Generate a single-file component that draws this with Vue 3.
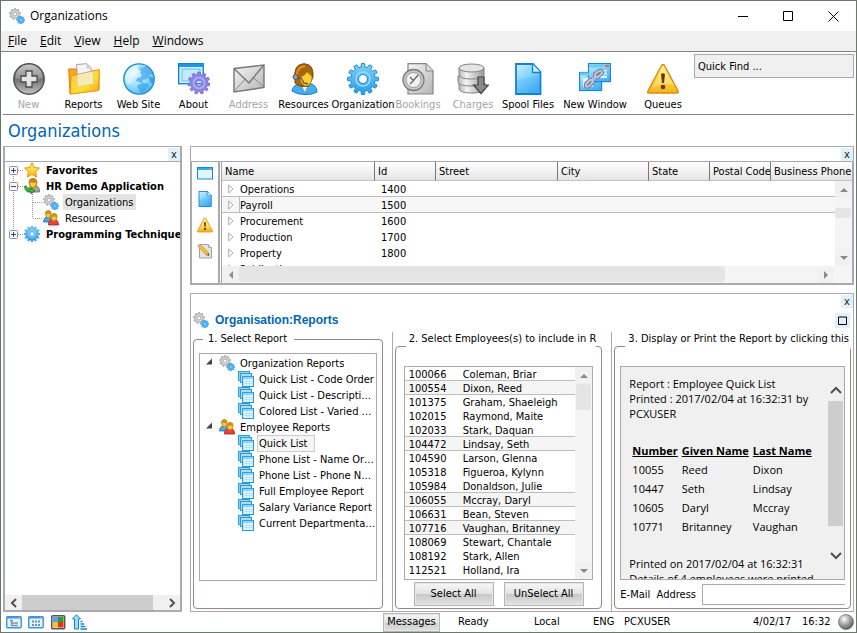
<script setup>
import { ref } from 'vue'

const gear = (cx, cy, outer, inner, teeth, hole) => {
  const step = (Math.PI * 2) / teeth
  const point = (r, a) => `${(cx + r * Math.cos(a)).toFixed(2)} ${(cy + r * Math.sin(a)).toFixed(2)}`
  let d = ''
  for (let i = 0; i < teeth; i++) {
    const a = i * step - Math.PI / 2
    d += `${i ? 'L' : 'M'}${point(inner, a - step * 0.32)}L${point(outer, a - step * 0.2)}`
    d += `L${point(outer, a + step * 0.2)}L${point(inner, a + step * 0.32)}`
  }
  return `${d}ZM${cx - hole} ${cy}a${hole} ${hole} 0 1 0 ${hole * 2} 0a${hole} ${hole} 0 1 0 ${-hole * 2} 0Z`
}

const menus = ['File', 'Edit', 'View', 'Help', 'Windows']
const tools = [
  { label: 'New', icon: 'new', off: true },
  { label: 'Reports', icon: 'reports' },
  { label: 'Web Site', icon: 'globe' },
  { label: 'About', icon: 'about' },
  { label: 'Address', icon: 'mail', off: true },
  { label: 'Resources', icon: 'person' },
  { label: 'Organization', icon: 'gear' },
  { label: 'Bookings', icon: 'bookings', off: true },
  { label: 'Charges', icon: 'charges', off: true },
  { label: 'Spool Files', icon: 'page' },
  { label: 'New Window', icon: 'link' },
  { label: 'Queues', icon: 'warning' },
]
const nav = [
  { label: 'Favorites', icon: 'star', box: '+', line: 'M8.5 8V16' },
  { label: 'HR Demo Application', icon: 'user', box: '-', line: 'M8.5 0V16' },
  { label: 'Organizations', icon: 'gears', child: true, on: true, line: 'M8.5 0V16M9 8.5H19' },
  { label: 'Resources', icon: 'people', child: true, line: 'M8.5 0V8M9 8.5H19' },
  { label: 'Programming Techniques', icon: 'gear', box: '+', line: 'M8.5 0V8' },
]
const columns = ['Name', 'Id', 'Street', 'City', 'State', 'Postal Code', 'Business Phone']
const orgs = [
  ['Operations', '1400'],
  ['Payroll', '1500'],
  ['Procurement', '1600'],
  ['Production', '1700'],
  ['Property', '1800'],
  ['Publications', ''],
]
const reports = [
  { label: 'Organization Reports', icon: 'gears', top: true },
  { label: 'Quick List - Code Order' },
  { label: 'Quick List - Description Order' },
  { label: 'Colored List - Varied Fonts' },
  { label: 'Employee Reports', icon: 'people', top: true },
  { label: 'Quick List', on: true },
  { label: 'Phone List - Name Order' },
  { label: 'Phone List - Phone Number' },
  { label: 'Full Employee Report' },
  { label: 'Salary Variance Report' },
  { label: 'Current Departmental Report' },
]
const employees = ref([
  ['100066', 'Coleman, Briar'],
  ['100554', 'Dixon, Reed', true],
  ['101375', 'Graham, Shaeleigh'],
  ['102015', 'Raymond, Maite'],
  ['102033', 'Stark, Daquan'],
  ['104472', 'Lindsay, Seth', true],
  ['104590', 'Larson, Glenna'],
  ['105318', 'Figueroa, Kylynn'],
  ['105984', 'Donaldson, Julie'],
  ['106055', 'Mccray, Daryl', true],
  ['106631', 'Bean, Steven'],
  ['107716', 'Vaughan, Britanney', true],
  ['108069', 'Stewart, Chantale'],
  ['108192', 'Stark, Allen'],
  ['112521', 'Holland, Ira'],
])
const mark = (value) => employees.value.forEach((e) => { e[2] = value })
const printed = [
  ['10055', 'Reed', 'Dixon'],
  ['10447', 'Seth', 'Lindsay'],
  ['10605', 'Daryl', 'Mccray'],
  ['10771', 'Britanney', 'Vaughan'],
]
const quickFind = ref('Quick Find ...')
const email = ref('')
</script>

<template>
  <svg class="defs" width="0" height="0" aria-hidden="true">
    <defs>
      <linearGradient id="gBlue" x1="0" y1="0" x2="0.6" y2="1"><stop offset="0" stop-color="#d2f2ff" /><stop offset="0.5" stop-color="#86d2fb" /><stop offset="1" stop-color="#45b2f5" /></linearGradient>
      <linearGradient id="gGear" x1="0" y1="0" x2="0" y2="1"><stop offset="0" stop-color="#7fd0fa" /><stop offset="1" stop-color="#2d9cea" /></linearGradient>
      <linearGradient id="gGrey" x1="0" y1="0" x2="1" y2="1"><stop offset="0" stop-color="#f6f6f6" /><stop offset="1" stop-color="#b4b4b4" /></linearGradient>
      <linearGradient id="gDark" x1="0" y1="0" x2="0" y2="1"><stop offset="0" stop-color="#b9b9b9" /><stop offset="0.5" stop-color="#6e6e6e" /><stop offset="1" stop-color="#c4c4c4" /></linearGradient>
      <linearGradient id="gGold" x1="0" y1="0" x2="0" y2="1"><stop offset="0" stop-color="#fff3a0" /><stop offset="0.5" stop-color="#ffd83a" /><stop offset="1" stop-color="#f7b21c" /></linearGradient>
      <linearGradient id="gFolder" x1="0" y1="0" x2="1" y2="1"><stop offset="0" stop-color="#ffc04a" /><stop offset="0.6" stop-color="#ffe22c" /><stop offset="1" stop-color="#f59a16" /></linearGradient>
      <linearGradient id="gCyl" x1="0" y1="0" x2="1" y2="0"><stop offset="0" stop-color="#b5b5b5" /><stop offset="0.3" stop-color="#f4f4f4" /><stop offset="1" stop-color="#9a9a9a" /></linearGradient>
      <radialGradient id="gGlobe" cx="0.35" cy="0.3" r="0.8"><stop offset="0" stop-color="#e9fbff" /><stop offset="0.5" stop-color="#a4e2ff" /><stop offset="1" stop-color="#46b0f0" /></radialGradient>
      <radialGradient id="gBall" cx="0.38" cy="0.3" r="0.75"><stop offset="0" stop-color="#fff" /><stop offset="0.4" stop-color="#b5b5b5" /><stop offset="1" stop-color="#555" /></radialGradient>
    </defs>

    <symbol id="i-new" viewBox="0 0 32 32">
      <circle cx="16" cy="16" r="15.2" fill="url(#gDark)" stroke="#4f4f4f" stroke-width="1.4" />
      <path d="M2.5 15A13.5 13.5 0 0 1 29.500 15Q16 21 2.500 15Z" fill="#fff" opacity=".22" />
      <path d="M13 8h6v5h5v6h-5v5h-6v-5H8v-6h5Z" fill="#e4e4e4" stroke="#4a4a4a" stroke-width="1.3" />
    </symbol>
    <symbol id="i-reports" viewBox="0 0 32 32">
      <path d="M.7 6h8l2 2H31v19L2 31Z" fill="#f9a51f" stroke="#e07d10" />
      <path d="M8.500 1.500 19 .700l4 4V20H10Z" fill="#f4f4f4" stroke="#a5a5a5" />
      <path d="M18.500 1v4.500H23Z" fill="#cdcdcd" />
      <path d="M3 13 31.300 6.500 30.500 27.500 2.500 31Z" fill="url(#gFolder)" stroke="#ee9614" />
      <path d="m9 11.500 16.500-3.500v13L9 24Z" fill="#f2f2ea" stroke="#c9c3a8" stroke-width=".8" opacity=".7" />
    </symbol>
    <symbol id="i-globe" viewBox="0 0 32 32">
      <circle cx="16" cy="16" r="15.200" fill="url(#gGlobe)" stroke="#168bd9" stroke-width="1.300" />
      <path d="m14 5 3-2.500 5 0 5 3.500 3 5-4 1-2 4-4 1-1 2 3 1-2 1-4-2-3-1 1-3 4-1 1-2-2-2 1-2Z" fill="#3ba2ea" opacity=".7" />
      <path d="m16 21 4 0 4-1 2 2-1 3-4 4-3 1.500-2-4-2-3Z" fill="#3ba2ea" opacity=".7" />
      <path d="m25 13 4 1 2 2-1 5-3-2Z" fill="#2d99e8" opacity=".8" />
      <path d="M2 13Q8-1 24 3 12 6 10 15T3 20Z" fill="#fff" opacity=".4" />
    </symbol>
    <symbol id="i-about" viewBox="0 0 32 32">
      <rect x=".7" y=".7" width="24.500" height="20" fill="#d9f3ff" stroke="#0e83d8" stroke-width="1.400" />
      <path d="M1 2.500h24" stroke="#1c96e6" stroke-width="3" />
      <rect x="4" y="6" width="18" height="12" fill="#c0eaff" stroke="#5dbdf2" />
      <path :d="gear(21, 20, 11, 8.5, 11, 3)" fill="#8b86e6" fill-rule="evenodd" stroke="#6e6ac9" stroke-width=".8" />
      <circle cx="21" cy="20" r="5.500" fill="none" stroke="#b5b0f5" stroke-width="1.500" />
    </symbol>
    <symbol id="i-mail" viewBox="0 0 32 32">
      <path d="m1 5.500 30-3.500v22.500L1 29Z" fill="url(#gGrey)" stroke="#767676" stroke-width="1.400" />
      <path d="m1 28.500 11.500-13M31 24 19.500 14" stroke="#8a8a8a" fill="none" />
      <path d="m1.500 6 14.500 14L30.500 2.500" stroke="#777" stroke-width="1.400" fill="none" />
    </symbol>
    <symbol id="i-person" viewBox="0 0 32 32">
      <path d="M4 28q0-5 8-8l9 0q8 2 8 9-5 3-12 2.500Q9 31.500 4 28Z" fill="#48acee" stroke="#167ecb" />
      <path d="M13 21h7l-3 8Z" fill="#f2fbff" />
      <path d="M7 17Q5 1 16 .700 26 1 25 14l-4 9q-9 2-14-3Z" fill="#a9650d" stroke="#7e4606" />
      <path d="M12 14q5-1 7-5 4 3 5 5-1 9-6 9-6-2-6-9Z" fill="#ffcf2f" stroke="#c5810e" stroke-width=".7" />
      <path d="M9 12q0-8 8-9" stroke="#d89330" stroke-width="2" fill="none" />
      <path d="M7 15h6l3 5 4 1" stroke="#555" stroke-width="1.300" fill="none" /><circle cx="7.500" cy="14" r="2.500" fill="#9a9a9a" stroke="#555" />
    </symbol>
    <symbol id="i-gear" viewBox="0 0 32 32">
      <path :d="gear(16, 16, 15.5, 12, 12, 4.5)" fill="url(#gGear)" fill-rule="evenodd" stroke="#148ce0" />
      <circle cx="16" cy="16" r="7" fill="none" stroke="#9bdafb" stroke-width="1.500" />
    </symbol>
    <symbol id="i-bookings" viewBox="0 0 32 32">
      <path d="M6 .700h18l7 7V31H6Z" fill="url(#gGrey)" stroke="#858585" stroke-width="1.200" />
      <path d="M24 1v7h7" fill="#ddd" stroke="#858585" />
      <circle cx="11.500" cy="17" r="10.500" fill="#c8c8c8" stroke="#7c7c7c" stroke-width="1.300" />
      <circle cx="11.500" cy="17" r="7.500" fill="#f1f1f1" stroke="#999" />
      <path d="m8 14 3.500 3.500L16 12M8 21l3.500-3.500" stroke="#666" stroke-width="1.300" fill="none" />
    </symbol>
    <symbol id="i-charges" viewBox="0 0 32 32">
      <g fill="url(#gCyl)" stroke="#828282">
        <path d="M2 20v6q1 4 13 4t13-4v-6Z" /><path d="M1 13v6q1 4 13 4t13-4v-6Z" /><path d="M2 5v7q1 4 12.500 4T27 12V5Z" />
        <ellipse cx="14.500" cy="5" rx="12.500" ry="4" fill="#e5e5e5" />
      </g>
      <path d="M21 14h6v8h4.500L24 30.500 16.500 22H21Z" fill="#898989" stroke="#444" stroke-width="1.200" />
    </symbol>
    <symbol id="i-page" viewBox="0 0 32 32">
      <path d="M4 1h17l7.500 8V31H4Z" fill="url(#gBlue)" stroke="#0f83d6" stroke-width="1.800" />
      <path d="M20.500 1v8.500h8" fill="#c9eeff" stroke="#0f83d6" stroke-width="1.300" />
      <path d="M5 17 27 12v18H5Z" fill="#1e9cf0" opacity=".14" />
    </symbol>
    <symbol id="i-link" viewBox="0 0 32 32">
      <g fill="url(#gBlue)" stroke="#1389d8" stroke-width="1.200"><rect x=".6" y="9.500" width="22" height="18" /><rect x="9.500" y=".6" width="22" height="18" /></g>
      <path d="M1 11h10M10 3h15" stroke="#6bc9f8" stroke-width="3" /><path d="M26 3h4" stroke="#e96644" stroke-width="2" />
      <path d="M18 7h10v8H18ZM4 15h10v9H4Z" fill="#def5ff" /><path d="M19 9h9M19 12h9M15 20h6M15 23h6" stroke="#55b8ed" />
      <g fill="none" stroke="#7d7a9e" stroke-width="4"><path d="m7 21 4-4q3-1 3 2l-4 4q-4 2-3-2Z" /><path d="m16 11 4-3q3-1 3 2l-4 4q-4 1-3-3Z" /></g>
      <g fill="none" stroke="#c4c1df" stroke-width="2"><path d="m7 21 4-4q3-1 3 2l-4 4q-4 2-3-2Z" /><path d="m16 11 4-3q3-1 3 2l-4 4q-4 1-3-3Z" /><path d="m12 18 6-5" /></g>
      <path d="m10 21 1.500-2M19.500 11.500l1.500-1.500" stroke="#4fae4a" stroke-width="1.500" />
    </symbol>
    <symbol id="i-warning" viewBox="0 0 32 32">
      <path d="M16 1.500q1 0 2 2L31 28q1 2-1 2H2q-2 0-1-2L14 3.500q1-2 2-2Z" fill="url(#gGold)" stroke="#da8d10" stroke-width="1.500" />
      <path d="M16 5 27.500 22Q13 19 5 26Z" fill="#fff" opacity=".28" />
      <path d="M14 11q2-1.500 4 0l-1 9h-2Z" fill="#6b3403" /><circle cx="16" cy="24" r="2.300" fill="#6b3403" />
    </symbol>
    <symbol id="i-gears" viewBox="0 0 16 16">
      <path :d="gear(6, 6, 5.700, 4.400, 9, 1.600)" fill="#b9b9b9" fill-rule="evenodd" stroke="#9a9a9a" stroke-width=".4" />
      <circle cx="6" cy="6" r="3" fill="none" stroke="#dedede" />
      <path :d="gear(11.800, 12, 4, 3.100, 8, 1)" fill="#4fb4f5" fill-rule="evenodd" stroke="#2390de" stroke-width=".5" />
    </symbol>
    <symbol id="i-star" viewBox="0 0 16 16"><path d="m8 .700 2.200 4.800 5.200.600-3.800 3.600 1 5.300L8 12.400 3.400 15l1-5.300L.600 6.100l5.200-.600Z" fill="url(#gGold)" stroke="#dc9410" /></symbol>
    <symbol id="i-user" viewBox="0 0 16 16">
      <path d="M3 14q0-5 5-6h4q4 1 3.500 6Z" fill="#a6a6a6" stroke="#666" stroke-width=".8" />
      <path d="M5 4q0-3.500 4-3.500t4 3.500q0 5-4 6-4-1-4-6Z" fill="#ffcd36" stroke="#b9750c" /><path d="M5 4Q6 0 9.500.600 13 1 13 4.500 8 5 5 4Z" fill="#c8820f" />
      <path d="m.6 8 2 0q0 3 4.400 3.500V9.500l4 3.500-4 3v-2Q0 13.500.6 8Z" fill="#3cba33" stroke="#17801a" stroke-width=".8" />
    </symbol>
    <symbol id="i-people" viewBox="0 0 16 16">
      <path d="M.6 12q0-5 4-5h2q3 1 3 5Z" fill="#43a8ea" stroke="#1676bb" stroke-width=".8" />
      <path d="M2.500 3.500q0-3 2.800-3t2.700 3q0 4-2.700 4.500-2.800-.500-2.800-4.500Z" fill="#ffc72c" stroke="#c98012" stroke-width=".8" /><path d="M2 4q1-4 4-3.400Q8.500 1 8 4Z" fill="#d88a1c" />
      <path d="M5.500 15q0-5 4-5.500h3q3 1 3 5.500Z" fill="#e84635" stroke="#a71b12" stroke-width=".8" />
      <path d="M8 6.500q0-3 3-3t3 3q0 4-3 4.500-3-.500-3-4.500Z" fill="#ffc72c" stroke="#c98012" stroke-width=".8" /><path d="M7.500 7q1-4 4-3.700 3 .500 2.800 3.200Z" fill="#d88a1c" />
    </symbol>
    <symbol id="i-window" viewBox="0 0 16 16"><rect x=".5" y="2.500" width="15" height="11.500" fill="#e0f5ff" stroke="#138bdb" /><path d="M1 4h14" stroke="#35a9ef" stroke-width="2" /><path d="M12 4h2.500" stroke="#f09a5a" /></symbol>
    <symbol id="i-edit" viewBox="0 0 16 16"><path d="M2.500 1.500h9l3 3V15h-12Z" fill="#e4e4e4" stroke="#a2a2a2" /><path d="M11.500 1.500v3h3" fill="#fff" stroke="#a2a2a2" /><path d="m.7 3 2.300-1.500 8.500 8 .5 3-3-.700Z" fill="#f8bf3b" stroke="#b98332" stroke-width=".7" /><path d="m10 12 2 .500-.400-2Z" fill="#333" /></symbol>
    <symbol id="i-stack" viewBox="0 0 16 16">
      <rect x=".5" y=".5" width="11" height="9" fill="#8fd6fb" stroke="#2d9be0" />
      <rect x="2.500" y="2.500" width="11" height="9" fill="#a5dffc" stroke="#2d9be0" />
      <rect x="4.500" y="5.500" width="11" height="10" fill="#8fd6fb" stroke="#2d9be0" />
      <path d="M5.500 8h9v7h-9Z" fill="#eaf9ff" />
      <path d="M5.500 10.500h9M5.500 12.500h9M8.500 8v7M11.500 8v7" stroke="#a9defa" stroke-width=".8" />
    </symbol>
    <symbol id="i-tree" viewBox="0 0 16 16"><rect x=".7" y="2.700" width="14.500" height="11" rx="1" fill="#e2f4ff" stroke="#3b95df" stroke-width="1.400" /><path d="M1 3.500h14" stroke="#3b95df" stroke-width="2" /><path d="M4 6.500h3M5.500 7v4.500H8M6 9h6M8 11.500h4" stroke="#8794a0" stroke-width="1.400" fill="none" /><path d="M12 3.500h2" stroke="#f29a49" /></symbol>
    <symbol id="i-tiles" viewBox="0 0 16 16"><rect x=".7" y="2.700" width="14.500" height="11" rx="1" fill="#e2f4ff" stroke="#3b95df" stroke-width="1.400" /><path d="M1 3.500h14" stroke="#3b95df" stroke-width="2" /><path d="M4 7.500h8M4 11h8" stroke="#7b8e9e" stroke-width="2" stroke-dasharray="2 1" /><path d="M12 3.500h2" stroke="#f29a49" /></symbol>
    <symbol id="i-color" viewBox="0 0 16 16"><rect x="1.700" y="1.700" width="13" height="13" rx="1" fill="#ddd" stroke="#565656" stroke-width="1.400" /><path d="M3 3h5v5H3Z" fill="#4aa6f2" /><path d="M8 3h5.500v5H8Z" fill="#2ca02c" /><path d="M3 8h5v5.500H3Z" fill="#f6c22b" /><path d="M8 8h5.500v5.500H8Z" fill="#e8331c" /></symbol>
    <symbol id="i-sort" viewBox="0 0 16 16"><path d="m4.500.700 4 4.300H6.500v10h-4V5H.5Z" fill="#9bdcfb" stroke="#1585cf" /><path d="M8.500 7.500h2M8.500 10h3.500M8.500 12.500h5M8.500 15h6.500" stroke="#1585cf" stroke-width="1.600" /></symbol>
    <symbol id="i-ball" viewBox="0 0 16 16"><circle cx="8" cy="8" r="7.500" fill="url(#gBall)" stroke="#555" stroke-width=".6" /></symbol>
    <symbol id="a-up" viewBox="0 0 8 8"><path d="M0 6 4 2l4 4Z" fill="currentColor" /></symbol>
    <symbol id="a-down" viewBox="0 0 8 8"><path d="m0 2 4 4 4-4Z" fill="currentColor" /></symbol>
    <symbol id="a-left" viewBox="0 0 8 8"><path d="M6 0 2 4l4 4Z" fill="currentColor" /></symbol>
    <symbol id="a-right" viewBox="0 0 8 8"><path d="m2 0 4 4-4 4Z" fill="currentColor" /></symbol>
  </svg>

  <div class="window">
    <header class="title">
      <svg class="i16"><use href="#i-gears" /></svg>
      <span>Organizations</span>
      <div class="controls">
        <button aria-label="Minimize"><svg viewBox="0 0 11 11"><path d="M0 5.500h10" /></svg></button>
        <button aria-label="Maximize"><svg viewBox="0 0 11 11"><path d="M.5.500h9v9h-9Z" /></svg></button>
        <button aria-label="Close"><svg viewBox="0 0 11 11"><path d="m.5.500 10 10m0-10-10 10" /></svg></button>
      </div>
    </header>
    <nav class="menu">
      <button v-for="m in menus" :key="m"><u>{{ m[0] }}</u>{{ m.slice(1) }}</button>
    </nav>
    <div class="toolbar">
      <div class="tools">
        <button v-for="t in tools" :key="t.label" :disabled="t.off">
          <svg><use :href="'#i-' + t.icon" /></svg><span>{{ t.label }}</span>
        </button>
      </div>
      <input v-model="quickFind" class="find" aria-label="Quick Find" />
    </div>
    <h1>Organizations</h1>

    <main>
      <section class="panel side">
        <div class="strip"><button class="x" aria-label="Close">x</button></div>
        <div class="tree">
          <div v-for="n in nav" :key="n.label" class="node" :class="{ child: n.child }">
            <svg v-if="n.child" class="guide"><path d="M8.500 0V16" /></svg>
            <svg class="guide">
              <path :d="n.line" />
              <template v-if="n.box">
                <path d="M13 8.500h6" />
                <rect x="4.500" y="4.500" width="8" height="8" rx="1" />
                <path class="sign" :d="n.box === '+' ? 'M6 8.500h5M8.500 6v5' : 'M6 8.500h5'" />
              </template>
            </svg>
            <svg class="i16"><use :href="'#i-' + n.icon" /></svg>
            <span :class="{ on: n.on }">{{ n.label }}</span>
          </div>
        </div>
        <div class="sysbar across">
          <button aria-label="Left"><svg viewBox="0 0 8 10"><path d="M6 1 2 5l4 4" /></svg></button>
          <div class="track"><i></i></div>
          <button aria-label="Right"><svg viewBox="0 0 8 10"><path d="m2 1 4 4-4 4" /></svg></button>
        </div>
      </section>

      <div class="right">
        <section class="panel list">
          <div class="strip"><button class="x" aria-label="Close">x</button></div>
          <div class="listbody">
            <div class="rail">
              <button v-for="i in ['window', 'page', 'warning', 'edit']" :key="i" :aria-label="i"><svg class="i16"><use :href="'#i-' + i" /></svg></button>
            </div>
            <div class="gridbox">
              <div class="clip">
                <table class="orgs">
                  <colgroup><col class="w1" /><col class="w2" /><col class="w3" /><col class="w4" /><col class="w2" /><col class="w2" /><col /></colgroup>
                  <thead><tr><th v-for="c in columns" :key="c">{{ c }}</th></tr></thead>
                  <tbody>
                    <tr v-for="(o, r) in orgs" :key="o[0]" :class="{ picked: r === 1 }">
                      <td class="name"><div><svg viewBox="0 0 6 10"><path d="M.7 1v8l4.300-4Z" /></svg><span>{{ o[0] }}</span></div></td>
                      <td>{{ o[1] }}</td><td colspan="5"></td>
                    </tr>
                  </tbody>
                </table>
                <div class="bar down over">
                  <button aria-label="Up"><svg><use href="#a-up" /></svg></button>
                  <div class="track"><i></i></div>
                  <button aria-label="Down"><svg><use href="#a-down" /></svg></button>
                </div>
              </div>
              <div class="bar across">
                <button aria-label="Left"><svg><use href="#a-left" /></svg></button>
                <div class="track"><i></i></div>
                <button aria-label="Right"><svg><use href="#a-right" /></svg></button>
              </div>
            </div>
          </div>
        </section>

        <section class="panel work">
          <div class="strip"><button class="x" aria-label="Close">x</button></div>
          <div class="worktitle">
            <svg class="i16"><use href="#i-gears" /></svg>
            <h2>Organisation:Reports</h2>
            <button class="x" aria-label="Maximize"><svg viewBox="0 0 9 9"><path d="M.5 1h8v7.500h-8Z" /></svg></button>
          </div>
          <div class="steps">
            <div class="step one">
              <fieldset>
                <legend>1. Select Report</legend>
                <div class="reports">
                  <div v-for="r in reports" :key="r.label" class="rep" :class="{ top: r.top }">
                    <svg v-if="r.top" class="tri" viewBox="0 0 8 8"><path d="M7 0.500V6.500H1Z" /></svg>
                    <svg class="i16"><use :href="'#i-' + (r.icon || 'stack')" /></svg>
                    <span :class="{ on: r.on }">{{ r.label }}</span>
                  </div>
                </div>
              </fieldset>
            </div>
            <div class="step two">
              <fieldset>
                <legend>2. Select Employees(s) to include in Report</legend>
                <div class="people">
                  <table>
                    <tbody>
                      <tr v-for="e in employees" :key="e[0]" :class="{ picked: e[2] }" @click="e[2] = !e[2]"><td>{{ e[0] }}</td><td>{{ e[1] }}</td></tr>
                    </tbody>
                  </table>
                  <div class="bar down">
                    <button aria-label="Up"><svg><use href="#a-up" /></svg></button>
                    <div class="track"><i></i></div>
                    <button aria-label="Down"><svg><use href="#a-down" /></svg></button>
                  </div>
                </div>
                <div class="pair"><button class="push" @click="mark(true)">Select All</button><button class="push" @click="mark(false)">UnSelect All</button></div>
              </fieldset>
            </div>
            <div class="step three">
              <fieldset>
                <legend>3. Display or Print the Report by clicking this button</legend>
                <div class="output">
                  <div class="paper">
                    <p>Report : Employee Quick List<br />Printed : 2017/02/04 at 16:32:31 by PCXUSER</p>
                    <table>
                      <thead><tr><th>Number</th><th>Given Name</th><th>Last Name</th></tr></thead>
                      <tbody><tr v-for="p in printed" :key="p[0]"><td v-for="c in p" :key="c">{{ c }}</td></tr></tbody>
                    </table>
                    <p>Printed on 2017/02/04 at 16:32:31<br />Details of 4 employees were printed</p>
                  </div>
                  <div class="sysbar down">
                    <button aria-label="Up"><svg viewBox="0 0 12 8"><path d="m1 7 5-5 5 5" /></svg></button>
                    <div class="track"><i></i></div>
                    <button aria-label="Down"><svg viewBox="0 0 12 8"><path d="m1 1 5 5 5-5" /></svg></button>
                  </div>
                </div>
                <div class="mail"><label for="email">E-Mail&nbsp; Address</label><input id="email" v-model="email" type="email" /></div>
              </fieldset>
            </div>
          </div>
        </section>
      </div>
    </main>

    <footer>
      <div class="views">
        <button v-for="i in ['tree', 'tiles', 'color', 'sort']" :key="i" :aria-label="i"><svg class="i16"><use :href="'#i-' + i" /></svg></button>
      </div>
      <div><button class="push msg">Messages</button></div>
      <span>Ready</span><span>Local</span><span>ENG</span><span>PCXUSER</span><span>4/02/17</span><span>16:32</span>
      <svg class="i16"><use href="#i-ball" /></svg>
    </footer>
  </div>
</template>

<style>
body { margin: 0; background: #fff; }
</style>

<style scoped>
* { box-sizing: border-box; }
.defs { position: absolute; }
.window {
  height: 100vh; min-height: 520px; display: flex; flex-direction: column; overflow: hidden;
  border: 1px solid #6b776c; padding: 0 2px; background: #fff; color: #000;
  font: 11px/16px "DejaVu Sans Condensed", "DejaVu Sans", sans-serif;
}
button, input { font: inherit; color: inherit; margin: 0; padding: 0; border: 0; background: none; border-radius: 0; }
svg { display: block; flex: none; }
.i16 { width: 16px; height: 16px; }
.title, .menu, .paper { font-family: "Open Sans", "Noto Sans", sans-serif; font-size: 12px; }
.title { display: flex; align-items: center; height: 30px; flex: none; padding-left: 6px; gap: 5px; }
.controls { display: flex; margin: 0 -2px 0 auto; }
.controls button { width: 45px; height: 28px; display: grid; place-items: center; }
.controls svg { width: 11px; height: 11px; fill: none; stroke: #000; }
.menu { display: flex; gap: 13px; flex: none; height: 21px; margin: 0 -2px; padding: 0 7px; background: #f0f0f0; border-bottom: 1px solid #848484; line-height: 18px; }
.toolbar { display: flex; flex: none; height: 63px; border-bottom: 1px solid #848484; }
.tools { display: grid; grid-template-columns: repeat(6, 55px) 64px 46px 64px 46px 88px 48px; margin-left: -2px; }
.tools button { display: flex; flex-direction: column; align-items: center; padding-top: 11px; min-width: 0; white-space: nowrap; }
.tools svg { width: 32px; height: 32px; }
.tools span { line-height: 20px; }
.tools button:disabled { color: #a5a5a5; }
.find { margin: 2px 0 0 auto; width: 160px; height: 24px; background: #f0f0f0; border: 1px solid #a9a9b2; padding-left: 3px; }
h1 { flex: none; margin: 0; padding-left: 5px; height: 31px; font: 18px/31px "DejaVu Sans Condensed", "DejaVu Sans", sans-serif; color: #0066b3; }
main { flex: 1; min-height: 0; display: flex; gap: 8px; }
.panel { display: flex; flex-direction: column; min-height: 0; min-width: 0; border: 1px solid #a9a9af; }
.strip { display: flex; justify-content: flex-end; align-items: flex-end; flex: none; height: 14px; }
.x { width: 12px; height: 13px; line-height: 12px; background: #dff0ff; color: #222; display: grid; place-items: center; }
.side { width: 179px; flex: none; border-width: 1px 2px 2px; }
.tree { flex: 1; min-height: 0; border-top: 1px solid #a9a9af; overflow: hidden; }
.node { display: flex; height: 16px; font-weight: bold; white-space: nowrap; }
.node.child { font-weight: normal; }
.node > span { margin-left: 4px; padding: 0 2px; height: 16px; line-height: 18px; }
.node .on { background: #e3e3e3; padding-right: 3px; }
.guide { width: 19px; height: 16px; fill: none; stroke: #999; stroke-dasharray: 1 1; }
.guide rect { fill: #f7f7f7; stroke-dasharray: none; stroke: #929292; }
.guide .sign { stroke: #2c4a9a; stroke-dasharray: none; }
.sysbar { display: flex; flex: none; background: #f0f0f0; }
.sysbar button { width: 17px; height: 15px; display: grid; place-items: center; }
.sysbar svg { width: 8px; height: 10px; fill: none; stroke: #505050; stroke-width: 2; }
.sysbar .track { flex: 1; display: flex; }
.sysbar i { background: #cdcdcd; }
.sysbar.across i { width: 93%; }
.sysbar.down { width: 17px; flex-direction: column; padding: 12px 0; }
.sysbar.down button { height: 22px; }
.sysbar.down svg { width: 12px; height: 8px; }
.sysbar.down i { width: 15px; height: 87%; margin-left: 1px; }
.right { flex: 1; min-width: 0; display: flex; flex-direction: column; gap: 8px; }
.list { height: 139px; flex: none; border-bottom-width: 2px; }
.listbody { flex: 1; min-height: 0; display: flex; border-top: 1px solid #a9a9af; }
.rail { width: 29px; flex: none; border-left: 1px solid #a9a9af; border-right: 2px solid #a9a9af; display: flex; flex-direction: column; gap: 10px; align-items: center; padding-top: 3px; }
.gridbox { flex: 1; min-width: 0; margin-left: 1px; border-left: 1px solid #a9a9af; border-right: 1px solid #a9a9af; display: flex; flex-direction: column; }
.clip { flex: 1; min-height: 0; overflow: hidden; position: relative; }
table { border-collapse: separate; border-spacing: 0; }
.orgs { width: 100%; table-layout: fixed; }
.w1 { width: 152px; } .w2 { width: 61px; } .w3 { width: 122px; } .w4 { width: 91px; }
.orgs th { height: 19px; padding: 2px 0 0 3px; line-height: 16px; text-align: left; font-weight: normal; white-space: nowrap; overflow: hidden; background: linear-gradient(#fff, #e4e4e4); border-bottom: 1px solid #c4c4c4; border-left: 1px solid #777; }
.orgs th:first-child { border-left: 0; }
.orgs td { height: 16px; padding: 0 0 0 7px; line-height: 15px; }
.orgs .name { padding: 0; }
.name div { display: flex; align-items: center; padding-left: 6px; gap: 5px; }
.name svg { width: 6px; height: 10px; fill: #fff; stroke: #aaa; }
.name span { flex: 1; padding-left: 1px; height: 16px; line-height: 17px; }
.orgs .picked td:not(.name), .orgs .picked .name span { background: #f7f7f7; box-shadow: 0 -1px #bdbdbd, inset 0 -1px #bdbdbd; }
.orgs .picked .name span { border-left: 1px solid #bdbdbd; padding-left: 0; }
.bar { display: flex; background: #f5f5f5; flex: none; color: #8a8a8a; }
.bar button { width: 17px; height: 17px; display: grid; place-items: center; background: #f1f1f1; border-radius: 2px; }
.bar svg { width: 8px; height: 8px; }
.bar .track { flex: 1; }
.bar i { display: block; background: #e5e5e5; border-radius: 2px; }
.bar.across { height: 17px; padding-right: 18px; }
.bar.across i { height: 16px; width: 84%; }
.bar.down { width: 17px; flex-direction: column; }
.over { position: absolute; right: 0; top: 19px; bottom: 0; }
.over i { height: 10px; margin: 10px 1px 0 0; }
.work { flex: 1; }
.worktitle { display: flex; align-items: center; flex: none; height: 20px; margin-top: 2px; padding-left: 2px; gap: 6px; }
.worktitle h2 { margin: 0; font: bold 12px/16px "Liberation Sans", Arial, sans-serif; color: #0066b3; flex: 1; }
.worktitle .x { width: 15px; height: 15px; margin-right: 3px; }
.worktitle .x svg { width: 9px; height: 9px; fill: none; stroke: #000; stroke-width: 1; }
.steps { flex: 1; min-height: 0; display: grid; grid-template-columns: 201fr 220fr 242fr; margin-top: 2px; overflow: hidden; }
.step { display: flex; min-width: 0; min-height: 0; padding: 0 9px 2px 2px; }
.two { border-left: 1px solid #a9a9af; }
.three { border-left: 1px solid #a9a9af; padding-right: 2px; }
fieldset { flex: 1; min-width: 0; display: flex; flex-direction: column; margin: 0; padding: 7px 5px 27px; border: 1px solid #9c8585; border-radius: 4px; }
legend { margin-left: 4px; padding: 0 7px 0 5px; line-height: 14px; height: 14px; white-space: nowrap; overflow: hidden; }
.two legend, .three legend { height: 28px; padding: 0; text-indent: 3px; }
.two fieldset, .three fieldset { padding: 6px 8px 2px; }
.two legend { width: 190px; margin: 0 -6px 0 2px; }
.three fieldset { padding: 6px 5px 3px; }
.three legend { margin-left: 5px; width: 100%; }
.reports { flex: 1; min-height: 0; overflow: hidden; border: 1px solid #a9a9af; padding-top: 1px; }
.rep { display: flex; height: 16px; padding-left: 38px; }
.rep.top { padding-left: 5px; }
.tri { width: 8px; height: 8px; margin: 3px 6px 0 0; fill: #444; }
.rep span { padding: 0 0 0 2px; margin-left: 3px; line-height: 17px; height: 17px; white-space: nowrap; overflow: hidden; text-overflow: ellipsis; }
.rep .on { background: #f5f5f5; outline: 1px solid #ccc; outline-offset: -1px; padding-right: 8px; }
.people { flex: 1; min-height: 0; overflow: hidden; display: flex; border: 1px solid #a9a9af; }
.people table { flex: 1; align-self: flex-start; }
.people td { height: 14px; padding: 2px 0 0 4px; line-height: 12px; white-space: nowrap; }
.people td:first-child { width: 54px; }
.picked td { background: #f5f5f5; box-shadow: 0 -1px #bdbdbd, inset 0 -1px #bdbdbd; }
.people i { height: 26px; margin: 0 1px; }
.pair { display: flex; justify-content: center; gap: 10px; padding-top: 2px; }
.push { width: 80px; height: 24px; border: 1px solid #b5b5b5; box-shadow: inset 0 0 0 1px #e6e6e6; background: linear-gradient(#f7f7f7, #e3e3e3 50%, #c9c9c9 52%, #e2e2e2); }
.output { flex: 1; min-height: 0; overflow: hidden; display: flex; background: #f0f0f0; border: 1px solid #a9a9af; }
.paper { flex: 1; min-width: 0; padding: 9px 0 0 8px; font-size: 11px; line-height: 15px; height: 0; }
.paper p { margin: 0; }
.paper table { margin: 20px 0 20px 2px; }
.paper td, .paper th { padding: 0 3px 0 1px; line-height: 19px; height: 19px; text-align: left; white-space: nowrap; }
.paper th { text-decoration: underline; }
.mail { display: flex; align-items: center; padding-top: 4px; gap: 6px; }
.mail label { white-space: nowrap; }
.mail input { flex: 1; min-width: 0; height: 21px; border: 1px solid #a9a9af; border-right: 0; padding: 0 3px; background: #fff; }
footer { flex: none; height: 20px; display: grid; grid-template-columns: 380px 75px 76px 59px 31px 1fr 49px 36px 16px; align-items: center; }
.views { display: flex; gap: 6px; padding-left: 3px; }
.msg { width: 57px; height: 19px; display: block; line-height: 16px; }
</style>
